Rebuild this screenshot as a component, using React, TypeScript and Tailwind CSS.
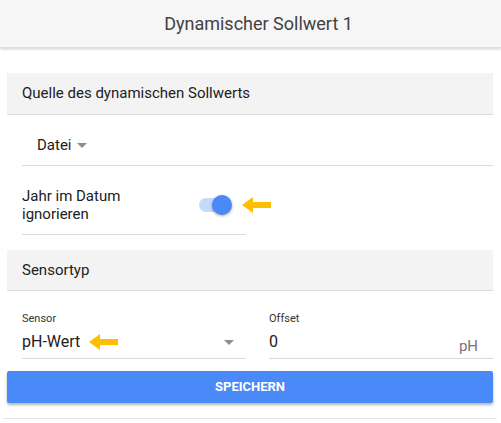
import React, { useState } from 'react';

const YellowArrow: React.FC<{ className?: string }> = ({ className }) => (
  <svg width="29" height="16" viewBox="0 0 29 16" className={className}>
    <polygon points="0,8 11,0 11,5 29,5 29,11 11,11 11,16" fill="#ffbf00" />
  </svg>
);

const Caret: React.FC<{ className?: string }> = ({ className }) => (
  <svg width="10" height="5" viewBox="0 0 10 5" className={className}>
    <polygon points="0,0 10,0 5,5" fill="#8e8e8e" />
  </svg>
);

export default function App() {
  const [ignoreYear, setIgnoreYear] = useState(true);

  return (
    <div className="w-[501px] h-[423px] bg-white font-['Roboto',sans-serif] text-[#212121] overflow-hidden">
      <div className="h-[48px] bg-[#f6f6f6] flex items-center justify-center pl-[16px] shadow-[0_1px_3px_rgba(0,0,0,0.2)] border-b border-[#dedede]">
        <h1 className="text-[18px] text-[#424242]">Dynamischer Sollwert 1</h1>
      </div>

      <div className="px-[7px] pt-[25px] pr-[8px]">
        {/* Quelle */}
        <div className="h-[42px] bg-[#f3f3f3] border-b border-[#dcdcdc] pl-[15px] flex items-center text-[15px]">
          Quelle des dynamischen Sollwerts
        </div>

        <div className="ml-[15px] h-[51px] border-b border-[#dcdcdc] pt-[21px] pl-[15px] flex items-start">
          <div className="flex items-center gap-[5px] text-[15px] leading-[18px]">
            <span>Datei</span>
            <Caret />
          </div>
        </div>

        <div className="ml-[15px] w-[224px] h-[69px] border-b border-[#dcdcdc] flex items-center pt-[10px]">
          <span className="w-[150px] text-[15px] leading-[18px]">Jahr im Datum ignorieren</span>
          <div className="relative ml-[27px] flex items-center">
            <button
              onClick={() => setIgnoreYear(!ignoreYear)}
              className="relative w-[34px] h-[20px] flex items-center"
            >
              <span className={`absolute left-0 w-[32px] h-[14px] rounded-full ${ignoreYear ? 'bg-[#c6dafc]' : 'bg-[#c9c9c9]'}`} />
              <span
                className={`absolute w-[20px] h-[20px] rounded-full shadow-[0_1px_3px_rgba(0,0,0,0.35)] ${ignoreYear ? 'left-[13px] bg-[#4a8af8]' : 'left-[-3px] bg-[#fafafa]'}`}
              />
            </button>
            <YellowArrow className="absolute left-[43px] top-[2px]" />
          </div>
        </div>

        {/* Sensortyp */}
        <div className="mt-[15px] h-[41px] bg-[#f3f3f3] border-b border-[#dcdcdc] pl-[15px] flex items-center text-[15px]">
          Sensortyp
        </div>

        <div className="pl-[15px] grid grid-cols-[224px_224px] gap-x-[23px]">
          <div className="pt-[21px] border-b border-[#dcdcdc] pb-[6px]">
            <div className="text-[11px] leading-[14px] text-[#333]">Sensor</div>
            <div className="mt-[6px] h-[20px] flex items-center text-[16px] leading-[20px]">
              <span>pH-Wert</span>
              <YellowArrow className="ml-[9px]" />
              <Caret className="ml-auto mr-[12px]" />
            </div>
          </div>
          <div className="pt-[21px] border-b border-[#dcdcdc] pb-[6px]">
            <div className="text-[11px] leading-[14px] text-[#333]">Offset</div>
            <div className="mt-[6px] h-[20px] flex items-start text-[16px] leading-[20px]">
              <span>0</span>
              <span className="ml-auto mr-[15px] mt-[4px] text-[15px] text-[#757575]">pH</span>
            </div>
          </div>
        </div>

        <button className="mt-[12px] w-full h-[32px] bg-[#4a8af8] rounded-[2px] text-white text-[13px] font-bold shadow-[0_2px_3px_rgba(0,0,0,0.3)]">
          SPEICHERN
        </button>

        <div className="mt-[15px] -mx-[4px] border-b border-[#e6e6e6]" />
      </div>
    </div>
  );
}
